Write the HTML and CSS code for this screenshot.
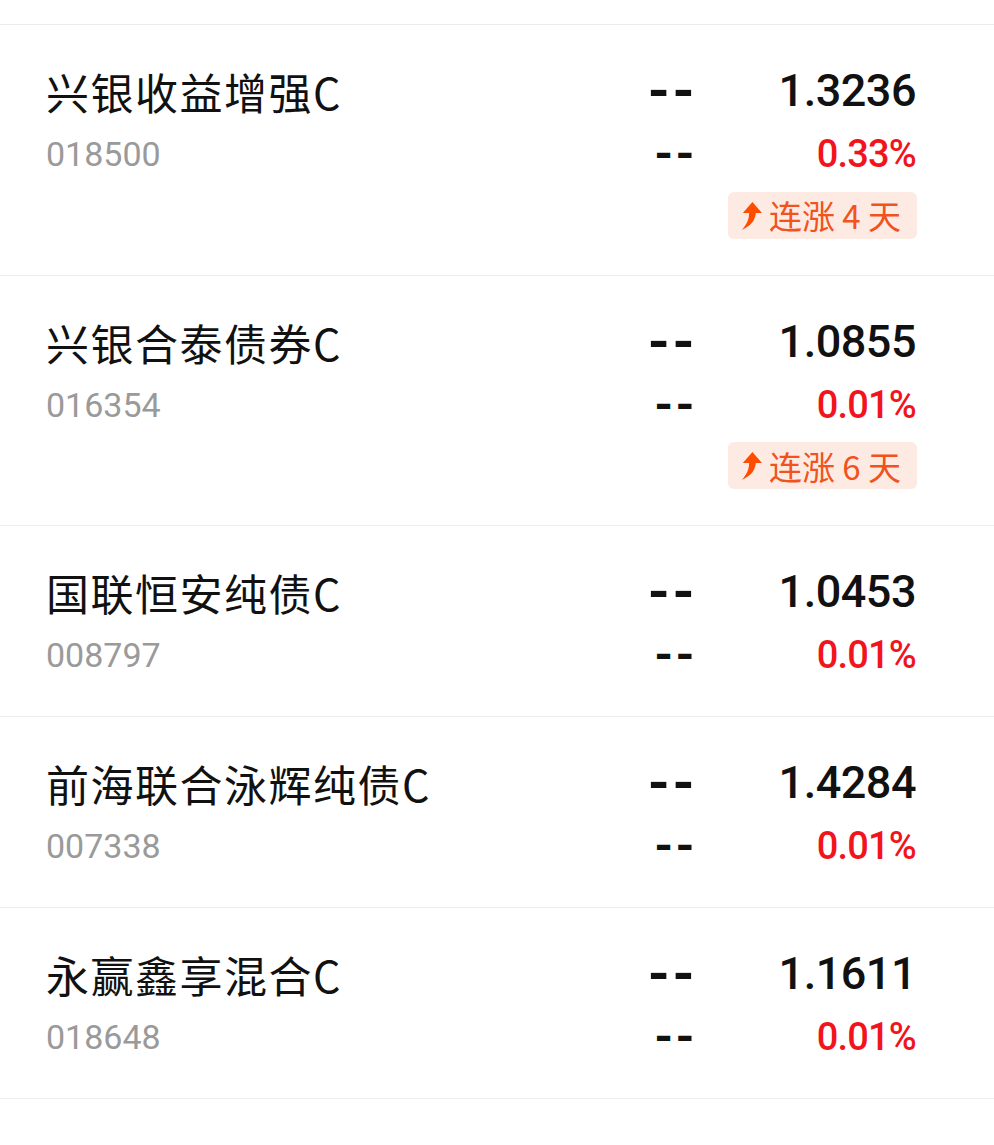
FILE: index.html
```html
<!DOCTYPE html>
<html lang="zh-CN">

<head>
    <meta charset="UTF-8">
    <title>自选基金</title>
    <link rel="stylesheet" href="styles.css">
</head>

<body>

    <div class="fund-list">
        <!-- tail of the row above, scrolled off -->
        <div class="fund-stub"></div>

        <div class="fund">
            <div class="col col-info">
                <div class="fund-name">兴银收益增强C</div>
                <div class="fund-code">018500</div>
            </div>
            <div class="col col-est">
                <div class="line-1 dash">--</div>
                <div class="line-2 dash dash-sm">--</div>
            </div>
            <div class="col col-nav">
                <div class="line-1 nav-value">1.3236</div>
                <div class="line-2 nav-rate">0.33%</div>
                <div class="streak">
                    <svg class="streak-icon" viewBox="0 0 24 30">
                        <path d="M14 1 L24 12.5 L17.5 12.5 C17 20 12.5 26 3 30 C8.5 24 10.5 19 10.5 12.5 L4 12.5 Z" />
                    </svg>
                    <span>连涨 4 天</span>
                </div>
            </div>
        </div>

        <div class="fund">
            <div class="col col-info">
                <div class="fund-name">兴银合泰债券C</div>
                <div class="fund-code">016354</div>
            </div>
            <div class="col col-est">
                <div class="line-1 dash">--</div>
                <div class="line-2 dash dash-sm">--</div>
            </div>
            <div class="col col-nav">
                <div class="line-1 nav-value">1.0855</div>
                <div class="line-2 nav-rate">0.01%</div>
                <div class="streak">
                    <svg class="streak-icon" viewBox="0 0 24 30">
                        <path d="M14 1 L24 12.5 L17.5 12.5 C17 20 12.5 26 3 30 C8.5 24 10.5 19 10.5 12.5 L4 12.5 Z" />
                    </svg>
                    <span>连涨 6 天</span>
                </div>
            </div>
        </div>

        <div class="fund">
            <div class="col col-info">
                <div class="fund-name">国联恒安纯债C</div>
                <div class="fund-code">008797</div>
            </div>
            <div class="col col-est">
                <div class="line-1 dash">--</div>
                <div class="line-2 dash dash-sm">--</div>
            </div>
            <div class="col col-nav">
                <div class="line-1 nav-value">1.0453</div>
                <div class="line-2 nav-rate">0.01%</div>
            </div>
        </div>

        <div class="fund">
            <div class="col col-info">
                <div class="fund-name">前海联合泳辉纯债C</div>
                <div class="fund-code">007338</div>
            </div>
            <div class="col col-est">
                <div class="line-1 dash">--</div>
                <div class="line-2 dash dash-sm">--</div>
            </div>
            <div class="col col-nav">
                <div class="line-1 nav-value">1.4284</div>
                <div class="line-2 nav-rate">0.01%</div>
            </div>
        </div>

        <div class="fund">
            <div class="col col-info">
                <div class="fund-name">永赢鑫享混合C</div>
                <div class="fund-code">018648</div>
            </div>
            <div class="col col-est">
                <div class="line-1 dash">--</div>
                <div class="line-2 dash dash-sm">--</div>
            </div>
            <div class="col col-nav">
                <div class="line-1 nav-value">1.1611</div>
                <div class="line-2 nav-rate">0.01%</div>
            </div>
        </div>

        <div class="fund">
            <div class="col col-info">
                <div class="fund-name">东方臻享纯债债券C</div>
                <div class="fund-code">003839</div>
            </div>
            <div class="col col-est">
                <div class="line-1 dash">--</div>
                <div class="line-2 dash dash-sm">--</div>
            </div>
            <div class="col col-nav">
                <div class="line-1 nav-value">1.0921</div>
                <div class="line-2 nav-rate">0.01%</div>
            </div>
        </div>
    </div>

</body>

</html>
```

FILE: styles.css
```css
* {
    box-sizing: border-box;
}

body {
    margin: 0;
    background: #fff;
    font-family: Roboto, "Noto Sans CJK SC", sans-serif;
    color: #111;
    overflow: hidden;
}

.fund-stub {
    height: 25px;
    border-bottom: 1px solid #ececec;
}

.fund {
    display: grid;
    grid-template-columns: 1fr auto 200px;
    column-gap: 20px;
    padding: 38px 77px 36px 46px;
    border-bottom: 1px solid #ececec;
}

.col {
    display: flex;
    flex-direction: column;
    row-gap: 10px;
}

.col-est,
.col-nav {
    align-items: flex-end;
}

.fund-name,
.line-1 {
    height: 56px;
    line-height: 56px;
    white-space: nowrap;
}

.fund-code,
.line-2 {
    height: 50px;
    line-height: 50px;
}

.fund-name {
    font-family: "Noto Sans CJK SC", sans-serif;
    font-size: 43px;
    letter-spacing: 1.5px;
    color: #111;
}

.fund-code {
    font-size: 34px;
    color: #9a9a9a;
}

.dash {
    font-size: 56px;
    font-weight: 700;
    letter-spacing: 2.5px;
    color: #111;
}

.dash-sm {
    font-size: 48px;
}

.nav-value {
    font-size: 45px;
    font-weight: 500;
    letter-spacing: -0.5px;
    margin-right: 1px;
    color: #111;
}

.nav-rate {
    font-size: 38px;
    font-weight: 500;
    letter-spacing: -0.8px;
    margin-right: 1px;
    color: #f2141c;
}

.streak {
    display: flex;
    align-items: center;
    gap: 7px;
    margin-top: 2.5px;
    height: 47px;
    padding: 0 16px 0 11px;
    border-radius: 6px;
    background: #fdebe3;
    color: #f0531d;
    font-family: "Noto Sans CJK SC", sans-serif;
    font-size: 33px;
}

.streak-icon {
    width: 23px;
    height: 29px;
    fill: #ff4d00;
}
```
